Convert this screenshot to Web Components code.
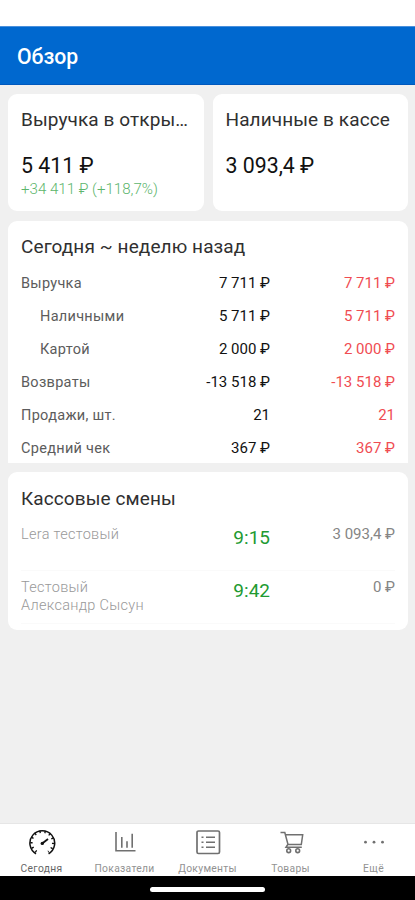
<!DOCTYPE html>
<html lang="ru">
<head>
<meta charset="utf-8">
<title>Обзор</title>
<style>
  body { margin: 0; background: #f0f0f0; font-family: Roboto, "Liberation Sans", sans-serif; }
</style>
</head>
<body>
<overview-app></overview-app>

<script>
class AppHeader extends HTMLElement {
  constructor() {
    super();
    this.attachShadow({ mode: 'open' }).innerHTML = `
      <style>
        :host { display: block; padding-top: 26px; background: #fff; }
        .bar { box-sizing: border-box; height: 59px; padding: 0 17px; background: #0068cf; border-top: 1px solid #4a90dc; border-bottom: 1px solid #0058bd; color: #fff; font-size: 21.2px; font-weight: 500; line-height: 60px; }
      </style>
      <div class="bar"><slot></slot></div>
    `;
  }
}

class InfoCard extends HTMLElement {
  constructor() {
    super();
    this.attachShadow({ mode: 'open' }).innerHTML = `
      <style>
        :host { display: block; box-sizing: border-box; background: #fff; border-radius: 9px; padding: 12px 13px 0; overflow: hidden; }
        .title { font-size: 19px; line-height: 28px; letter-spacing: 0.1px; color: #303030; white-space: nowrap; }
      </style>
      <div class="title">${this.getAttribute('heading')}</div>
      <slot></slot>
    `;
  }
}

class MoneyValue extends HTMLElement {
  constructor() {
    super();
    const delta = this.getAttribute('delta');
    this.attachShadow({ mode: 'open' }).innerHTML = `
      <style>
        :host { display: block; padding-top: 19px; white-space: nowrap; }
        .value { font-size: 21.3px; line-height: 26px; color: #111; }
        .delta { font-size: 15.1px; line-height: 20px; color: #5cb56c; font-weight: 300; }
      </style>
      <div class="value"><slot></slot></div>
      ${delta ? `<div class="delta">${delta}</div>` : ''}
    `;
  }
}

class CompareTable extends HTMLElement {
  constructor() {
    super();
    const rows = [
      { name: 'Выручка', now: '7 711 ₽', was: '7 711 ₽' },
      { name: 'Наличными', now: '5 711 ₽', was: '5 711 ₽', nested: true },
      { name: 'Картой', now: '2 000 ₽', was: '2 000 ₽', nested: true },
      { name: 'Возвраты', now: '-13 518 ₽', was: '-13 518 ₽' },
      { name: 'Продажи, шт.', now: '21', was: '21' },
      { name: 'Средний чек', now: '367 ₽', was: '367 ₽' }
    ];
    this.attachShadow({ mode: 'open' }).innerHTML = `
      <style>
        :host { display: block; padding-top: 6px; }
        .row { display: grid; grid-template-columns: 1fr 100px 125px; height: 33px; line-height: 33px; font-size: 15px; white-space: nowrap; }
        .name { color: #5c5c5c; font-size: 14.5px; letter-spacing: 0.3px; }
        .nested { padding-left: 19px; }
        .now, .was { text-align: right; }
        .now { color: #111; }
        .was { color: #f04c52; }
      </style>
      ${rows.map(r => `
        <div class="row">
          <span class="name ${r.nested ? 'nested' : ''}">${r.name}</span>
          <span class="now">${r.now}</span>
          <span class="was">${r.was}</span>
        </div>
      `).join('')}
    `;
  }
}

class ShiftRow extends HTMLElement {
  constructor() {
    super();
    this.attachShadow({ mode: 'open' }).innerHTML = `
      <style>
        :host { display: grid; grid-template-columns: 1fr 80px 125px; box-sizing: border-box; height: 53px; padding-top: 8px; border-bottom: 1px solid #fafafa; font-size: 14.5px; line-height: 18px; }
        .name { color: #999; font-weight: 300; letter-spacing: 0.3px; }
        .time { color: #219a31; font-size: 19px; line-height: 23px; text-align: right; }
        .sum { color: #858585; font-size: 15px; line-height: 17px; text-align: right; }
      </style>
      <div class="name"><slot></slot></div>
      <div class="time">${this.getAttribute('time')}</div>
      <div class="sum">${this.getAttribute('sum')}</div>
    `;
  }
}

class TabBar extends HTMLElement {
  constructor() {
    super();
    const tabs = [
      {
        label: 'Сегодня', active: true,
        icon: `
          <path d="M8 24.8A12.4 12.4 0 1 1 20.6 24.8" stroke-width="1.5"/>
          <path d="M8.5 22.8A10.9 10.9 0 1 1 20.1 22.8" stroke-width="2.4" stroke-dasharray="1.4 3.6"/>
          <path d="M14.5 14.3 20 10" stroke-width="1.8"/>
          <circle cx="14.3" cy="14.4" r="1.7" fill="currentColor" stroke="none"/>`
      },
      {
        label: 'Показатели',
        icon: `<path d="M5 3V21.7H24.5M10.8 18.7V8M16 18.7V12.3M21.2 18.7V4.8" stroke-width="1.6"/>`
      },
      {
        label: 'Документы',
        icon: `
          <rect x="3" y="2" width="22.5" height="22.5" rx="1.5" stroke-width="1.7"/>
          <path d="M7.5 8.3H9.5M7.5 13.3H9.5M7.5 18.3H9.5M12 8.3H21M12 13.3H21M12 18.3H21" stroke-width="1.6"/>`
      },
      {
        label: 'Товары',
        icon: `
          <path d="M3.5 3.5H7.8L11 15.5H24.3L25.7 5.8H8.5M10.8 15.5 9 18.2H24.8" stroke-width="1.5"/>
          <circle cx="11.7" cy="21.7" r="1.9" stroke-width="1.6"/>
          <circle cx="20.7" cy="21.7" r="1.9" stroke-width="1.6"/>`
      },
      {
        label: 'Ещё',
        icon: `<g fill="currentColor" stroke="none"><circle cx="5.5" cy="13.2" r="1.4"/><circle cx="14" cy="13.2" r="1.4"/><circle cx="22.5" cy="13.2" r="1.4"/></g>`
      }
    ];
    this.attachShadow({ mode: 'open' }).innerHTML = `
      <style>
        :host { display: block; background: #000; height: 77px; }
        .tabs { display: grid; grid-template-columns: repeat(5, 1fr); box-sizing: border-box; height: 53px; background: #fff; border-top: 1px solid #e6e6e6; overflow: hidden; }
        .tab { display: flex; flex-direction: column; align-items: center; padding-top: 5px; color: #707070; }
        .tab.active { color: #111; }
        svg { display: block; width: 28px; height: 28px; fill: none; stroke: currentColor; }
        .label { font-size: 10.3px; line-height: 12px; margin-top: 6px; color: #929292; letter-spacing: 0.3px; }
        .active .label { color: #666; }
        .home { width: 115px; height: 5px; margin: 11px auto 0; border-radius: 3px; background: #fff; }
      </style>
      <div class="tabs">
        ${tabs.map(t => `
          <div class="tab ${t.active ? 'active' : ''}">
            <svg viewBox="0 0 28 28">${t.icon}</svg>
            <div class="label">${t.label}</div>
          </div>
        `).join('')}
      </div>
      <div class="home"></div>
    `;
  }
}

class OverviewApp extends HTMLElement {
  constructor() {
    super();
    this.attachShadow({ mode: 'open' }).innerHTML = `
      <style>
        :host { display: flex; flex-direction: column; height: 900px; }
        main { flex: 1; display: grid; grid-template-columns: 1fr 1fr; grid-template-rows: 117px 242px 158px; column-gap: 9px; row-gap: 9.5px; padding: 9px 7px 0 8px; align-content: start; }
        .wide { grid-column: 1 / -1; }
        .flat { border-radius: 9px 9px 0 0; }
        .shifts { padding-top: 13px; }
        .first { margin-top: 5px; }
      </style>
      <app-header>Обзор</app-header>
      <main>
        <info-card heading="Выручка в откры…">
          <money-value delta="+34 411 ₽ (+118,7%)">5 411 ₽</money-value>
        </info-card>
        <info-card heading="Наличные в кассе">
          <money-value>3 093,4 ₽</money-value>
        </info-card>
        <info-card class="wide flat" heading="Сегодня ~ неделю назад">
          <compare-table></compare-table>
        </info-card>
        <info-card class="wide shifts" heading="Кассовые смены">
          <shift-row class="first" time="9:15" sum="3 093,4 ₽">Lera тестовый</shift-row>
          <shift-row time="9:42" sum="0 ₽">Тестовый<br>Александр Сысун</shift-row>
        </info-card>
      </main>
      <tab-bar></tab-bar>
    `;
  }
}

customElements.define('app-header', AppHeader);
customElements.define('info-card', InfoCard);
customElements.define('money-value', MoneyValue);
customElements.define('compare-table', CompareTable);
customElements.define('shift-row', ShiftRow);
customElements.define('tab-bar', TabBar);
customElements.define('overview-app', OverviewApp);
</script>
</body>
</html>
